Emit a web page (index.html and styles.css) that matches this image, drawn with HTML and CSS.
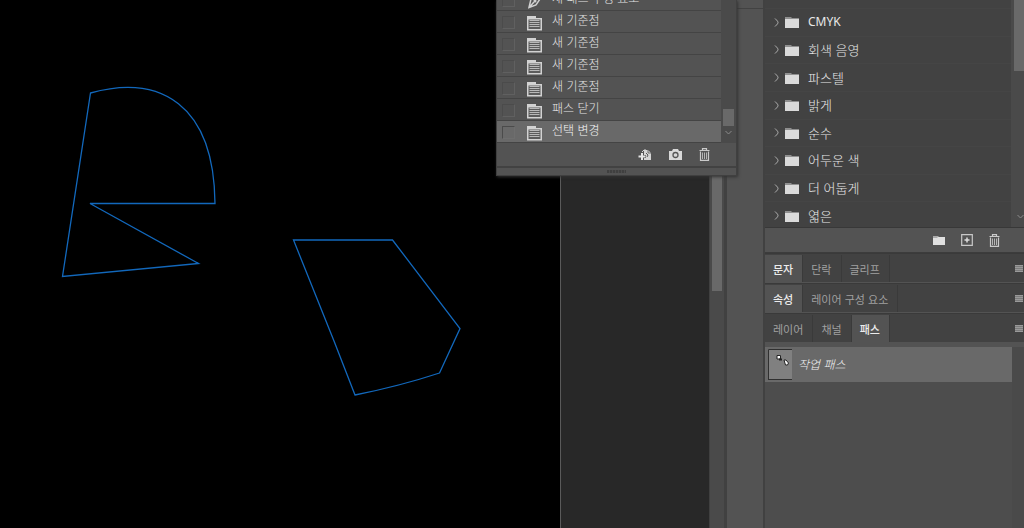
FILE: index.html
```html
<!DOCTYPE html>
<html lang="ko">
<head>
<meta charset="utf-8">
<title>작업 패스</title>
<link rel="stylesheet" href="styles.css">
</head>
<body>
<svg class="defs" aria-hidden="true">
  <symbol id="doc" viewBox="0 0 15 16"><path d="M0 1h9v2h6v12.500H0z" fill="#d2d2d2"/><path d="M1.500 4.500h12v9.500h-12z" fill="#5c5c5c"/><path d="M2.500 5.500h10M2.500 7.500h10M2.500 9.500h10M2.500 11.500h10" stroke="#b8b8b8"/></symbol>
  <symbol id="pen" viewBox="0 0 15 16"><path d="M2 14.500L4 6l5-4 4 4-4 6z M2.500 14L7 9" fill="none" stroke="#d0d0d0" stroke-width="1.500"/><circle cx="8" cy="8" r="1.500" fill="#d0d0d0"/></symbol>
  <symbol id="folder" viewBox="0 0 14 12"><path d="M0 1h6l1 1h7v10H0z" fill="#8f8f8f"/><path d="M0 3h14v9H0z" fill="#dadada"/></symbol>
  <symbol id="folder-new" viewBox="0 0 12 10"><path d="M0 1h5l1 1h6v8H0z" fill="#aaa"/><path d="M0 3h4l1-1h7v8H0z" fill="#e0e0e0"/></symbol>
  <symbol id="chev" viewBox="0 0 5 9"><path d="M1 .5c2 2 3 3 3 4s-1 2-3 4" fill="none" stroke="#b4b4b4"/></symbol>
  <symbol id="down" viewBox="0 0 7 5"><path d="M.5 1l3 3 3-3" fill="none" stroke="#8a8a8a"/></symbol>
  <symbol id="trash" viewBox="0 0 11 13"><path d="M.5 2.500h10M3.500 2.500V.6h4v1.900M1.500 3.500v8.900h8V3.500" fill="none" stroke="#cacaca" stroke-width="1.200"/><path d="M3.500 4.500v6.500M5.500 4.500v6.500M7.500 4.500v6.500" stroke="#b4b4b4"/></symbol>
  <symbol id="camera" viewBox="0 0 13 11"><path d="M0 2h3l1-2h5l1 2h3v9H0z" fill="#d8d8d8"/><circle cx="6.500" cy="6" r="2.500" fill="none" stroke="#555" stroke-width="1.300"/></symbol>
  <symbol id="newdoc" viewBox="0 0 14 12"><path d="M6 1h4l3 3v7H6z" fill="#d4d4d4"/><path d="M10 1v3h3" fill="none" stroke="#555" stroke-width=".8"/><path d="M4 4.500v7M0 7.500h8" stroke="#535353" stroke-width="3"/><path d="M4 4v7M.5 7.500h7" stroke="#e4e4e4" stroke-width="2"/><path d="M4 3l2-2h2" fill="none" stroke="#d4d4d4"/><path d="M8 4l2 2-1 2" fill="none" stroke="#555"/></symbol>
  <symbol id="plus" viewBox="0 0 12 12"><path d="M.7.7h10.600v10.600H.7z" fill="none" stroke="#c8c8c8" stroke-width="1.200"/><path d="M6 3.500v5M3.500 6h5" stroke="#dcdcdc" stroke-width="1.500"/></symbol>
  <symbol id="menu" viewBox="0 0 8 7"><path d="M0 0h8v7H0z" fill="#7c7c7c"/><path d="M0 .5h8M0 2.500h8M0 4.500h8M0 6.500h8" stroke="#9a9a9a"/></symbol>
</svg>

<div class="app">
  <main class="canvas">
    <svg class="paths" width="560" height="500" viewBox="0 0 560 500" role="img" aria-label="패스">
      <path d="M90.500 93C160 74 214 104 215 203.500H90L198.500 263.500 62.500 276.500z"/>
      <path d="M293.500 240H392.500L460 328.500 439.500 373 Q400 386 355 395 L334 341z"/>
    </svg>
  </main>
  <div class="pasteboard"></div>
  <div class="vscroll"><div class="vthumb"></div></div>
  <div class="dock"></div>

  <aside class="side">
    <section class="swatches">
      <div class="swatch-view">
        <div class="stub"></div>
        <ul class="swatch-list">
          <li><svg class="i-chev"><use href="#chev"/></svg><svg class="i-folder"><use href="#folder"/></svg><span class="latin">CMYK</span></li>
          <li><svg class="i-chev"><use href="#chev"/></svg><svg class="i-folder"><use href="#folder"/></svg><span>회색 음영</span></li>
          <li><svg class="i-chev"><use href="#chev"/></svg><svg class="i-folder"><use href="#folder"/></svg><span>파스텔</span></li>
          <li><svg class="i-chev"><use href="#chev"/></svg><svg class="i-folder"><use href="#folder"/></svg><span>밝게</span></li>
          <li><svg class="i-chev"><use href="#chev"/></svg><svg class="i-folder"><use href="#folder"/></svg><span>순수</span></li>
          <li><svg class="i-chev"><use href="#chev"/></svg><svg class="i-folder"><use href="#folder"/></svg><span>어두운 색</span></li>
          <li><svg class="i-chev"><use href="#chev"/></svg><svg class="i-folder"><use href="#folder"/></svg><span>더 어둡게</span></li>
          <li><svg class="i-chev"><use href="#chev"/></svg><svg class="i-folder"><use href="#folder"/></svg><span>엷은</span></li>
        </ul>
      </div>
      <div class="swatch-scroll"><div class="swatch-thumb"></div><svg class="i-down"><use href="#down"/></svg></div>
    </section>
    <div class="swatch-tools">
      <button aria-label="새 그룹"><svg class="i-fnew"><use href="#folder-new"/></svg></button>
      <button aria-label="새 색상"><svg class="i-plus"><use href="#plus"/></svg></button>
      <button aria-label="삭제"><svg class="i-trash"><use href="#trash"/></svg></button>
    </div>

    <div class="tabs"><button class="tab on">문자</button><button class="tab">단락</button><button class="tab">글리프</button><button class="menu" aria-label="메뉴"><svg class="i-menu"><use href="#menu"/></svg></button></div>
    <div class="tabs"><button class="tab on">속성</button><button class="tab">레이어 구성 요소</button><button class="menu" aria-label="메뉴"><svg class="i-menu"><use href="#menu"/></svg></button></div>
    <div class="tabs"><button class="tab">레이어</button><button class="tab">채널</button><button class="tab on">패스</button><button class="menu" aria-label="메뉴"><svg class="i-menu"><use href="#menu"/></svg></button></div>

    <section class="path-panel">
      <div class="path-list">
        <div class="path-row">
          <svg class="thumb" viewBox="0 0 24 31"><path d="M0 0h24v31H0z" fill="#808080"/><path d="M.5 31V.5H24M0 30.500h24" fill="none" stroke="#303030"/><path d="M9 6.500h3.500v3.500H9z M16 11h2l2.500 3-1 2h-2z" fill="#fff" stroke="#222"/><path d="M11 10.500h3" stroke="#222" stroke-width="2"/></svg>
          <em>작업 패스</em>
        </div>
      </div>
      <div class="path-scroll"></div>
    </section>
  </aside>

  <section class="history">
    <div class="history-body">
      <ul class="history-list">
        <li><label><input type="checkbox" aria-label="새 패스 구성 요소"></label><svg class="i-doc"><use href="#pen"/></svg><span>새 패스 구성 요소</span></li>
        <li><label><input type="checkbox" aria-label="새 기준점"></label><svg class="i-doc"><use href="#doc"/></svg><span>새 기준점</span></li>
        <li><label><input type="checkbox" aria-label="새 기준점"></label><svg class="i-doc"><use href="#doc"/></svg><span>새 기준점</span></li>
        <li><label><input type="checkbox" aria-label="새 기준점"></label><svg class="i-doc"><use href="#doc"/></svg><span>새 기준점</span></li>
        <li><label><input type="checkbox" aria-label="새 기준점"></label><svg class="i-doc"><use href="#doc"/></svg><span>새 기준점</span></li>
        <li><label><input type="checkbox" aria-label="패스 닫기"></label><svg class="i-doc"><use href="#doc"/></svg><span>패스 닫기</span></li>
        <li class="sel"><label><input type="checkbox" aria-label="선택 변경"></label><svg class="i-doc"><use href="#doc"/></svg><span>선택 변경</span></li>
      </ul>
      <div class="history-scroll"><div class="history-thumb"></div><svg class="i-down"><use href="#down"/></svg></div>
    </div>
    <div class="history-tools">
      <button aria-label="새 문서"><svg class="i-new"><use href="#newdoc"/></svg></button>
      <button aria-label="새 스냅숏"><svg class="i-cam"><use href="#camera"/></svg></button>
      <button aria-label="삭제"><svg class="i-trash"><use href="#trash"/></svg></button>
    </div>
    <div class="grip"><span></span></div>
  </section>
</div>
</body>
</html>
```
FILE: styles.css
```css
* { box-sizing: border-box; }
body { margin: 0; background: #000; font: 12px/16px "Noto Sans CJK KR", sans-serif; color: #d2d2d2; }
ul { margin: 0; padding: 0; list-style: none; }
button { border: 0; padding: 0; background: none; color: inherit; font: inherit; }
svg { display: block; flex: none; }
.defs { position: absolute; width: 0; height: 0; }
.app { position: relative; display: flex; height: 100vh; overflow: hidden; }

.canvas { flex: 1; min-width: 0; background: #000; overflow: hidden; }
.paths path { fill: none; stroke: #1268bc; stroke-width: 1.3; }
.pasteboard { width: 149px; background: #282828; border-left: 1px solid #5a5a5a; }
.vscroll { width: 15px; padding: 0 2px; background: #4a4a4a; border-left: 1px solid #404040; }
.vthumb { height: 291px; background: #696969; }
.dock { width: 41px; background: linear-gradient(#424242, #424242) 0 8px / 100% 1px no-repeat #535353; border-left: 3px solid #414141; border-right: 2px solid #414141; }

.side { width: 259px; display: flex; flex-direction: column; background: #4d4d4d; }
.swatches { display: flex; height: 228px; border-bottom: 1px solid #383838; }
.swatch-view { flex: 1; overflow: hidden; background: #424242; }
.stub { height: 8px; }
.swatch-list { display: grid; grid-template-rows: repeat(8, 1fr); height: 221px; }
.swatch-list li { display: flex; align-items: center; padding-left: 9px; border-top: 1px solid #454545; font-size: 13px; font-weight: 300; color: #e8e8e8; }
.i-chev { width: 5px; height: 9px; margin-right: 6px; }
.i-folder { width: 14px; height: 12px; margin-right: 9px; }
.latin { font-family: "Noto Sans", sans-serif; font-size: 12px; font-weight: 400; }
.swatch-scroll { width: 13px; display: flex; flex-direction: column; justify-content: space-between; align-items: flex-end; padding-bottom: 8px; background: #4a4a4a; }
.swatch-thumb { width: 10px; height: 71px; background: #696969; }
.i-down { width: 7px; height: 5px; }
.swatch-tools { display: flex; justify-content: flex-end; align-items: center; gap: 16px; height: 25px; padding-right: 24px; background: #535353; border-bottom: 1px solid #3c3c3c; }
.i-fnew { width: 12px; height: 10px; }
.i-plus { width: 12px; height: 12px; }
.i-trash { width: 11px; height: 13px; }

.tabs { display: flex; height: 30px; padding-top: 1px; background: #424242; border-bottom: 1px solid #535353; border-top: 1px solid #3a3a3a; color: #a0a0a0; font-size: 11px; }
.tab { padding: 0 9px 0 8px; border-right: 1px solid #3a3a3a; }
.tab.on { background: #535353; color: #ececec; font-weight: 500; }
.menu { margin-left: auto; padding-right: 1px; }
.i-menu { width: 8px; height: 7px; }

.path-panel { flex: 1; display: flex; border-top: 4px solid #535353; }
.path-list { flex: 1; }
.path-row { display: flex; align-items: center; gap: 6px; height: 35px; padding-left: 3px; background: #696969; color: #f0f0f0; font-weight: 300; }
.path-row em { padding-bottom: 2px; }
.thumb { width: 24px; height: 31px; }
.path-scroll { width: 12px; background: #4a4a4a; }

.history { position: absolute; left: 496px; top: 0; width: 241px; background: #535353; border: 1px solid #404040; border-top: 0; box-shadow: 1px 1px 3px #333; }
.history-body { display: flex; height: 143px; overflow: hidden; align-items: flex-end; }
.history-list { flex: 1; }
.history-list li { display: flex; align-items: center; height: 22px; padding-left: 5px; border-bottom: 1px solid #444; font-weight: 300; color: #e4e4e4; }
.history-list span { padding-bottom: 3px; }
.history-list .sel { background: #696969; color: #f6f6f6; }
.history-list input { display: block; appearance: none; width: 13px; height: 13px; margin: 2px 12px 0 0; border: 1px solid #4b4b4b; border-right-color: #606060; border-bottom-color: #606060; }
.history-list .sel input { border-right-color: #6e6e6e; border-bottom-color: #6e6e6e; }
.i-doc { width: 15px; height: 16px; margin: 2px 10px 0 0; }
.history-scroll { width: 15px; height: 143px; display: flex; flex-direction: column; justify-content: flex-end; align-items: center; gap: 4px; padding-bottom: 8px; background: #4a4a4a; }
.history-thumb { width: 11px; height: 17px; background: #696969; }
.history-tools { display: flex; justify-content: flex-end; align-items: center; gap: 17px; height: 25px; padding-right: 26px; border-bottom: 2px solid #424242; }
.i-new { width: 14px; height: 12px; }
.i-cam { width: 13px; height: 11px; }
.grip { display: flex; justify-content: center; align-items: center; height: 7px; }
.grip span { width: 19px; height: 3px; background: repeating-linear-gradient(90deg, #404040 0 2px, #4c4c4c 2px 3px); }
```
